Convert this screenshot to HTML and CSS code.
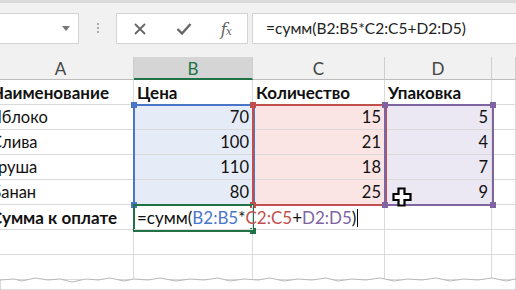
FILE: index.html
```html
<!DOCTYPE html>
<html lang="ru">
<head>
  <meta charset="UTF-8">
  <title>Сумма к оплате</title>
  <link rel="stylesheet" href="styles.css">
</head>
<body>
  <div class="toolbar">
    <div class="namebox"><span class="arrow"></span></div>
    <div class="grip"></div>
    <div class="fbuttons">
      <svg class="ico" width="14" height="14" viewBox="0 0 14 14"><path d="M2 2 L12 12 M12 2 L2 12" stroke="#666" stroke-width="1.8" fill="none"/></svg>
      <svg class="ico" width="16" height="14" viewBox="0 0 16 14"><path d="M1.5 7 L6 11.5 L14.5 2" stroke="#666" stroke-width="2.4" fill="none"/></svg>
      <span class="fx">f<small>x</small></span>
    </div>
    <div class="formula">=сумм(B2:B5*C2:C5+D2:D5)</div>
  </div>

  <div class="sheet">
    <div class="grid">
      <div class="colhead">A</div>
      <div class="colhead active">B</div>
      <div class="colhead">C</div>
      <div class="colhead">D</div>
      <div class="colhead"></div>

      <div class="cell bold">Наименование</div>
      <div class="cell bold">Цена</div>
      <div class="cell bold">Количество</div>
      <div class="cell bold">Упаковка</div>
      <div class="cell"></div>

      <div class="cell">Яблоко</div>
      <div class="cell num blue">70</div>
      <div class="cell num red">15</div>
      <div class="cell num purple">5</div>
      <div class="cell"></div>

      <div class="cell">Слива</div>
      <div class="cell num blue">100</div>
      <div class="cell num red">21</div>
      <div class="cell num purple">4</div>
      <div class="cell"></div>

      <div class="cell">Груша</div>
      <div class="cell num blue">110</div>
      <div class="cell num red">18</div>
      <div class="cell num purple">7</div>
      <div class="cell"></div>

      <div class="cell">Банан</div>
      <div class="cell num blue">80</div>
      <div class="cell num red">25</div>
      <div class="cell num purple">9</div>
      <div class="cell"></div>

      <div class="cell bold">Сумма к оплате</div>
      <div class="cell edit">=сумм(<span class="t-blue">B2:B5</span>*<span class="t-red">C2:C5</span>+<span class="t-purple">D2:D5</span>)<span class="caret"></span></div>
      <div class="cell"></div>
      <div class="cell"></div>
      <div class="cell"></div>

      <div class="cell"></div><div class="cell"></div><div class="cell"></div><div class="cell"></div><div class="cell"></div>
      <div class="cell"></div><div class="cell"></div><div class="cell"></div><div class="cell"></div><div class="cell"></div>
    </div>

    <div class="range r-blue"><i class="h tl"></i><i class="h bl"></i></div>
    <div class="range r-red"><i class="h tl"></i><i class="h bl"></i></div>
    <div class="range r-purple"><i class="h tl"></i><i class="h tr"></i><i class="h bl"></i><i class="h br"></i></div>
    <div class="range r-green"><i class="h br"></i></div>

    <svg class="cursor" width="20" height="20" viewBox="0 0 20 20">
      <path d="M6.5 1.5 H12.5 V7 H18.5 V13 H12.5 V18.5 H6.5 V13 H1.5 V7 H6.5 Z" fill="#fff" stroke="#000" stroke-width="2.2"/>
    </svg>

    <svg class="torn" width="516" height="14" viewBox="0 0 516 14" preserveAspectRatio="none">
      <path d="M0 4 L14 3 L22 5 L35 2 L48 4 L60 3 L72 6 L86 3 L98 4 L110 2 L124 5 L134 3 L148 4 L160 2 L176 5 L190 3 L204 4 L218 2 L230 5 L244 3 L258 4 L270 2 L284 5 L298 3 L312 4 L326 2 L338 5 L352 3 L366 4 L380 2 L394 5 L408 3 L422 4 L436 2 L450 5 L464 3 L478 4 L492 2 L506 5 L516 3 V14 H0 Z" fill="#fff" stroke="#b8b8b8" stroke-width="1"/>
    </svg>
  </div>
</body>
</html>
```

FILE: styles.css
```css
body {
  margin: 0;
  width: 516px;
  height: 290px;
  overflow: hidden;
  background: #fff;
  font-family: Lato, "Open Sans", sans-serif;
}
.toolbar {
  height: 57px;
  background: #f1f1f1;
  border-top: 3px solid #dadada;
  display: flex;
  align-items: flex-start;
  padding-top: 10px;
  box-sizing: border-box;
}
.namebox {
  width: 79px;
  height: 31px;
  background: #fff;
  border: 1px solid #d4d4d4;
  border-left: none;
  box-sizing: border-box;
  display: flex;
  align-items: center;
  justify-content: flex-end;
  padding-right: 8px;
}
.arrow {
  width: 0;
  height: 0;
  border-left: 4px solid transparent;
  border-right: 4px solid transparent;
  border-top: 5px solid #777;
}
.grip {
  width: 2px;
  height: 12px;
  margin: 10px 17px 0 18px;
  background: repeating-linear-gradient(180deg, #aaa 0 2px, transparent 2px 4px);
}
.fbuttons {
  width: 132px;
  height: 31px;
  background: #fff;
  border: 1px solid #d4d4d4;
  box-sizing: border-box;
  display: flex;
  align-items: center;
  justify-content: space-between;
  padding: 0 16px 0 16px;
}
.fx {
  font-family: "DejaVu Serif", "Liberation Serif", serif;
  font-style: italic;
  font-size: 17px;
  color: #666;
  letter-spacing: -1px;
}
.fx small {
  font-size: 11px;
}
.formula {
  flex: 1;
  height: 31px;
  margin-left: 4px;
  background: #fff;
  border: 1px solid #d4d4d4;
  border-right: none;
  box-sizing: border-box;
  padding-left: 13px;
  font-size: 15.5px;
  line-height: 29px;
  color: #222;
}
.sheet {
  position: relative;
  height: 233px;
  overflow: hidden;
}
.grid {
  display: grid;
  grid-template-columns: 146px 119px 132px 107px 1fr;
  grid-template-rows: 23px repeat(8, 25px);
  margin-left: -12px;
}
.colhead {
  background: #f1f1f1;
  border-right: 1px solid #cfcfcf;
  border-bottom: 1px solid #bdbdbd;
  text-align: center;
  font-size: 17px;
  line-height: 23px;
  color: #444;
}
.colhead.active {
  background: #d5d5d5;
  color: #217346;
  border-bottom: 2px solid #217346;
}
.cell {
  border-right: 1px solid #dadada;
  border-bottom: 1px solid #dadada;
  padding: 0 3px;
  font-size: 16.5px;
  line-height: 25px;
  color: #111;
  white-space: nowrap;
}
.bold {
  font-weight: bold;
  font-size: 17px;
}
.num {
  text-align: right;
}
.blue {
  background: #e6ecf7;
}
.red {
  background: #fbe4e4;
}
.purple {
  background: #ebe7f3;
}
.edit {
  font-size: 17px;
  z-index: 2;
}
.t-blue { color: #4a76c8; }
.t-red { color: #c0504d; }
.t-purple { color: #8064a2; }
.caret {
  display: inline-block;
  width: 1px;
  height: 18px;
  background: #000;
  vertical-align: -3px;
  margin-left: 1px;
}
.range {
  position: absolute;
  box-sizing: border-box;
  border: 2px solid;
}
.r-blue { border-color: #4a76c8; left: 133px; top: 47px; width: 122px; height: 102px; }
.r-red { border-color: #c0504d; left: 252px; top: 47px; width: 135px; height: 102px; }
.r-purple { border-color: #8064a2; left: 384px; top: 47px; width: 110px; height: 102px; }
.r-green { border-color: #217346; left: 133px; top: 147px; width: 121px; height: 28px; }
.h {
  position: absolute;
  width: 6px;
  height: 6px;
}
.r-blue .h { background: #4a76c8; }
.r-red .h { background: #c0504d; }
.r-purple .h { background: #8064a2; }
.r-green .h { background: #217346; }
.tl { left: -4px; top: -4px; }
.tr { right: -4px; top: -4px; }
.bl { left: -4px; bottom: -4px; }
.br { right: -4px; bottom: -4px; }
.cursor {
  position: absolute;
  left: 392px;
  top: 130px;
}
.torn {
  position: absolute;
  left: 0;
  bottom: 0;
}
```
